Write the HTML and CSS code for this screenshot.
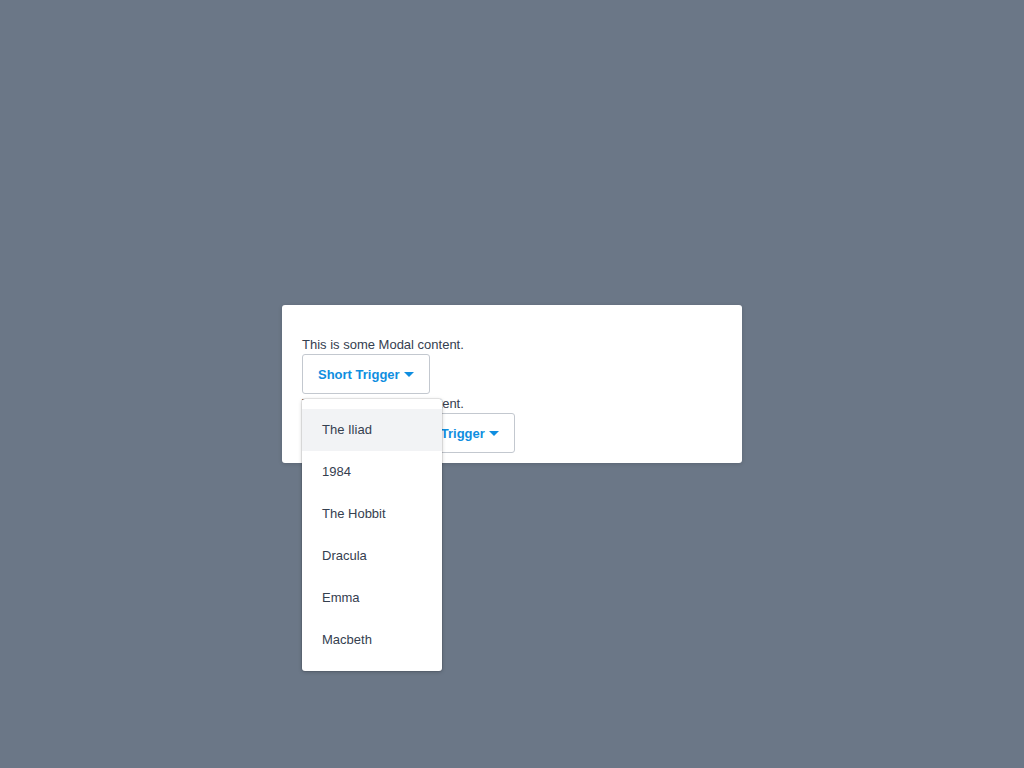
FILE: index.html
```html
<!DOCTYPE html>
<html>
<head>
<meta charset="utf-8">
<link rel="stylesheet" href="styles.css">
</head>
<body>
<div class="overlay">
  <div class="modal">
    <p class="text">This is some Modal content.</p>
    <div class="dropdown">
      <button class="trigger">Short Trigger <span class="caret"></span></button>
      <ul class="menu">
        <li class="item active">The Iliad</li>
        <li class="item">1984</li>
        <li class="item">The Hobbit</li>
        <li class="item">Dracula</li>
        <li class="item">Emma</li>
        <li class="item">Macbeth</li>
      </ul>
    </div>
    <p class="text">This is some Modal content.</p>
    <div class="dropdown">
      <button class="trigger">Much Much Longer Trigger <span class="caret"></span></button>
    </div>
  </div>
</div>
</body>
</html>
```

FILE: styles.css
```css
html, body {
  margin: 0;
  padding: 0;
  height: 100%;
}
body {
  background: #6b7787;
  font-family: "Liberation Sans", Arial, sans-serif;
  font-size: 13px;
  color: #35404f;
}
.overlay {
  height: 768px;
  display: flex;
  justify-content: center;
  align-items: flex-start;
  padding-top: 305px;
  box-sizing: border-box;
}
.modal {
  width: 460px;
  box-sizing: border-box;
  background: #fff;
  border-radius: 3px;
  box-shadow: 0 1px 4px rgba(0,0,0,0.15);
  padding: 30px 20px 10px;
}
.text {
  margin: 0;
  line-height: 19px;
  height: 19px;
}
.dropdown {
  position: relative;
  display: flex;
}
.trigger {
  font-family: "Liberation Sans", Arial, sans-serif;
  font-size: 13px;
  font-weight: bold;
  color: #0f8ee0;
  background: #fff;
  border: 1px solid #c3c8cf;
  border-radius: 3px;
  height: 40px;
  padding: 0 15px;
  display: flex;
  align-items: center;
  gap: 4px;
  cursor: pointer;
}
.caret {
  width: 0;
  height: 0;
  border-left: 5px solid transparent;
  border-right: 5px solid transparent;
  border-top: 5px solid #0f8ee0;
  margin-top: 1px;
}
.menu {
  position: absolute;
  top: 45px;
  left: 0;
  width: 140px;
  margin: 0;
  padding: 10px 0;
  list-style: none;
  background: #fff;
  border-radius: 3px;
  box-shadow: 0 0 0 1px rgba(0,0,0,0.08), 0 1px 4px rgba(0,0,0,0.2);
  box-sizing: border-box;
  z-index: 2;
}
.item {
  height: 42px;
  line-height: 42px;
  padding: 0 20px;
  color: #35404f;
}
.item.active {
  background: #f2f3f5;
}
```
